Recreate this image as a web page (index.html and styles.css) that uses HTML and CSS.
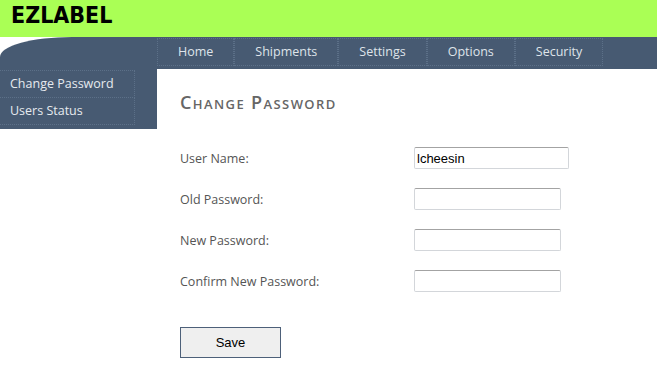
FILE: index.html
```html
<!DOCTYPE html>
<html lang="en">
<head>
  <meta charset="UTF-8" />
  <title>EZLABEL - Change Password</title>
  <link rel="stylesheet" href="styles.css">
</head>
<body>

  <div class="header">EZLABEL</div>

  <div class="topnav">
    <a href="#" class="nav-item">Home</a>
    <a href="#" class="nav-item">Shipments</a>
    <a href="#" class="nav-item">Settings</a>
    <a href="#" class="nav-item">Options</a>
    <a href="#" class="nav-item">Security</a>
  </div>

  <div class="layout">
    <div class="sidebar">
      <a href="#" class="side-item">Change Password</a>
      <a href="#" class="side-item">Users Status</a>
    </div>

    <div class="main">
      <h1>Change Password</h1>

      <div class="form">
        <label for="user">User Name:</label>
        <input id="user" class="field field-wide" type="text" value="lcheesin">

        <label for="oldPass">Old Password:</label>
        <input id="oldPass" class="field" type="password">

        <label for="newPass">New Password:</label>
        <input id="newPass" class="field" type="password">

        <label for="confirmPass">Confirm New Password:</label>
        <input id="confirmPass" class="field" type="password">
      </div>

      <button class="save-btn">Save</button>
    </div>
  </div>

</body>
</html>
```

FILE: styles.css
```css
body {
  margin: 0;
  font-family: "Open Sans", "Noto Sans", sans-serif;
  background: #fff;
  color: #555;
}

.header {
  height: 37px;
  background: #aaff55;
  color: #000;
  font-family: "DejaVu Sans Condensed", "DejaVu Sans", sans-serif;
  font-weight: bold;
  font-size: 23px;
  line-height: 30px;
  padding-left: 11px;
}

.topnav {
  display: flex;
  height: 31px;
  padding: 1px 0 0 157px;
  background: #475a72;
  border-top-left-radius: 72px 20px;
}

.nav-item {
  height: 26px;
  line-height: 26px;
  padding: 0 20px;
  font-size: 12.5px;
  color: #dfe4ea;
  text-decoration: none;
  border: 1px dotted #5c7088;
}

.layout {
  display: flex;
  align-items: flex-start;
}

.sidebar {
  width: 157px;
  flex-shrink: 0;
  padding: 1px 0 4px;
  background: #475a72;
}

.side-item {
  display: block;
  width: 124px;
  height: 26px;
  line-height: 26px;
  padding-left: 10px;
  font-size: 12.5px;
  color: #e6eaef;
  text-decoration: none;
  border: 1px dotted #5c7088;
  border-left: none;
}

.side-item + .side-item {
  border-top: none;
}

.main {
  padding: 22px 0 0 23px;
}

h1 {
  margin: 0 0 34px;
  font-size: 18px;
  line-height: 22px;
  font-weight: 600;
  font-variant: small-caps;
  letter-spacing: 1.4px;
  color: #666;
}

.form {
  display: grid;
  grid-template-columns: 234px auto;
  grid-auto-rows: 22px;
  row-gap: 19px;
  align-items: center;
  font-size: 12.5px;
}

.field {
  box-sizing: border-box;
  width: 147px;
  height: 22px;
  margin: 0;
  padding: 1px 2px;
  font-family: "Liberation Sans", Arial, sans-serif;
  font-size: 13px;
  color: #000;
  border: 1px solid #d3d6da;
  border-top-color: #a3a3a3;
  border-radius: 2px;
}

.field-wide {
  width: 155px;
}

.save-btn {
  display: block;
  width: 101px;
  height: 31px;
  margin-top: 35px;
  font-family: "Liberation Sans", Arial, sans-serif;
  font-size: 13px;
  color: #000;
  background: #efefef;
  border: 1px solid #4d6079;
  border-radius: 0;
}
```
